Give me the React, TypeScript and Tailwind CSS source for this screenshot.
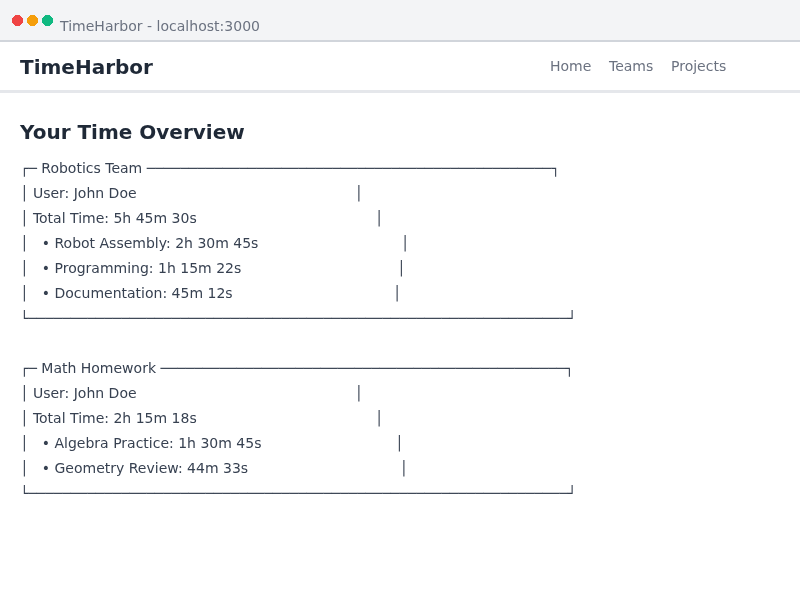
const dash = (n: number) => '─'.repeat(n);
const sp = (n: number) => ' '.repeat(n);

const lines: string[] = [
  '┌─ Robotics Team ' + dash(48) + '┐',
  '│ User: John Doe' + sp(49) + '│',
  '│ Total Time: 5h 45m 30s' + sp(40) + '│',
  '│   • Robot Assembly: 2h 30m 45s' + sp(32) + '│',
  '│   • Programming: 1h 15m 22s' + sp(35) + '│',
  '│   • Documentation: 45m 12s' + sp(36) + '│',
  '└' + dash(64) + '┘',
  '',
  '┌─ Math Homework ' + dash(48) + '┐',
  '│ User: John Doe' + sp(49) + '│',
  '│ Total Time: 2h 15m 18s' + sp(40) + '│',
  '│   • Algebra Practice: 1h 30m 45s' + sp(30) + '│',
  '│   • Geometry Review: 44m 33s' + sp(34) + '│',
  '└' + dash(64) + '┘',
];

function Dot({ color }: { color: string }) {
  return (
    <svg width="11" height="11" viewBox="0 0 11 11" shapeRendering="crispEdges" fill={color}>
      <path d="M3 0h5v1h1v1h1v1h1v5h-1v1h-1v1h-1v1h-5v-1h-1v-1h-1v-1h-1v-5h1v-1h1v-1h1z" />
    </svg>
  );
}

export default function App() {
  return (
    <div className="flex h-[600px] w-[800px] flex-col overflow-hidden bg-white font-['DejaVu_Sans',sans-serif] will-change-transform">
      <div className="flex h-[42px] shrink-0 border-b-2 border-[#d1d5db] bg-[#f3f4f6] pl-3">
        <div className="flex gap-1 pt-[15px]">
          <Dot color="#ef4444" />
          <Dot color="#f59e0b" />
          <Dot color="#10b981" />
        </div>
        <span className="ml-[7px] pt-4 text-[14px] leading-5 tracking-[0.02px] text-[#6b7280]">TimeHarbor - localhost:3000</span>
      </div>
      <header className="flex h-[51px] shrink-0 items-start justify-between border-b-3 border-[#e5e7eb] pl-5">
        <h1 className="pt-[13px] text-[20px] leading-6 font-bold text-[#1f2937]">TimeHarbor</h1>
        <nav className="flex w-[250px] pt-[14px] text-[14px] leading-5 text-[#6b7280]">
          <span className="w-[59px]">Home</span>
          <span className="w-[62px]">Teams</span>
          <span>Projects</span>
        </nav>
      </header>
      <main className="px-5 pt-[27px]">
        <h2 className="text-[20px] leading-6 font-bold text-[#1f2937]">Your Time Overview</h2>
        <div className="mt-3 text-[14px] leading-[25px] whitespace-pre text-[#374151]">
          {lines.map((line, i) => (
            <div key={i} className="h-[25px]">{line}</div>
          ))}
        </div>
      </main>
    </div>
  );
}
